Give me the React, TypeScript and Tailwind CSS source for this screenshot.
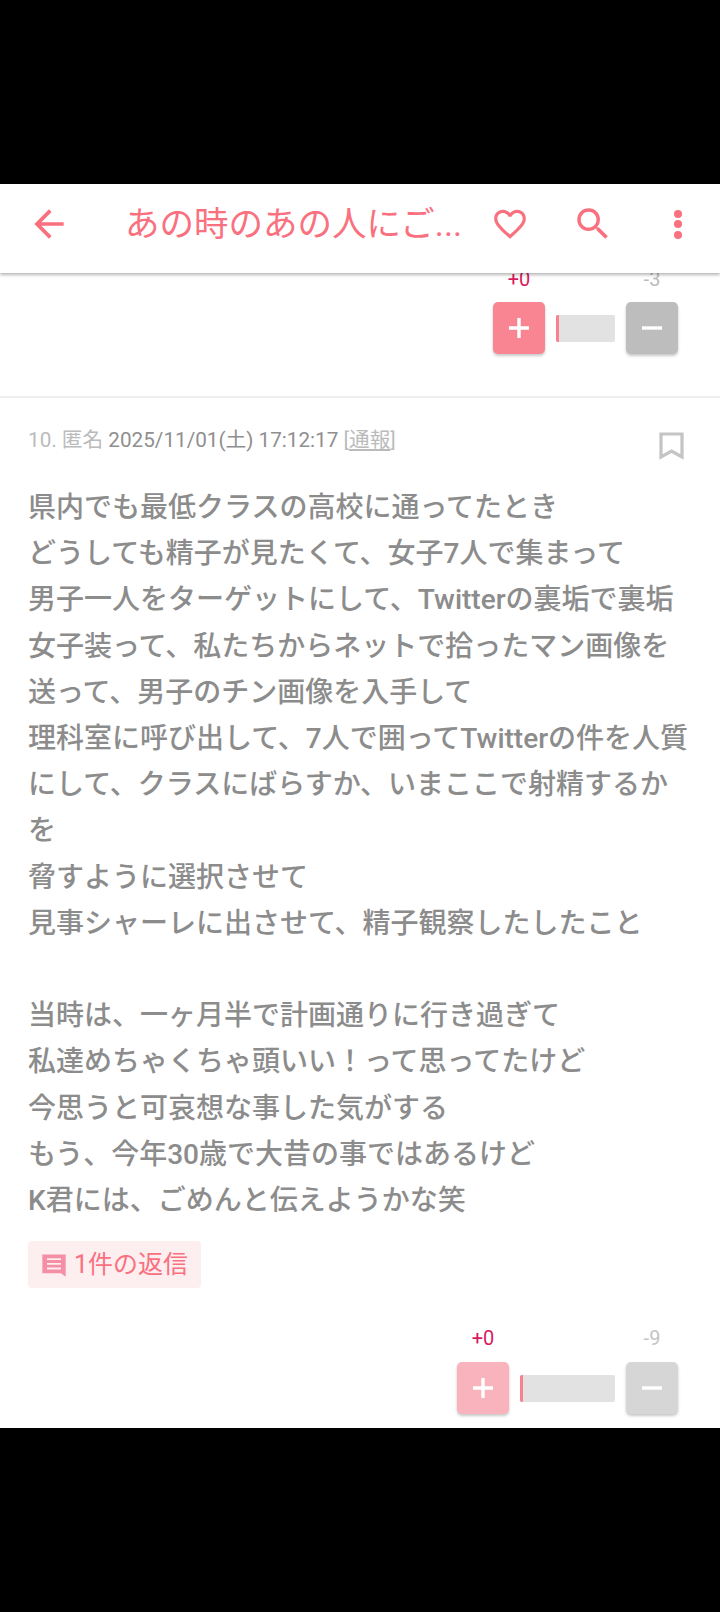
import { MdArrowBack, MdFavoriteBorder, MdSearch } from "react-icons/md";

const pink = "text-[#f9707f]";
const fontClass = "font-['Roboto','Noto_Sans_CJK_JP',sans-serif]";

const lines = [
  "県内でも最低クラスの高校に通ってたとき",
  "どうしても精子が見たくて、女子7人で集まって",
  "男子一人をターゲットにして、Twitterの裏垢で裏垢",
  "女子装って、私たちからネットで拾ったマン画像を",
  "送って、男子のチン画像を入手して",
  "理科室に呼び出して、7人で囲ってTwitterの件を人質",
  "にして、クラスにばらすか、いまここで射精するか",
  "を",
  "脅すように選択させて",
  "見事シャーレに出させて、精子観察したしたこと",
  "\u00a0",
  "当時は、一ヶ月半で計画通りに行き過ぎて",
  "私達めちゃくちゃ頭いい！って思ってたけど",
  "今思うと可哀想な事した気がする",
  "もう、今年30歳で大昔の事ではあるけど",
  "K君には、ごめんと伝えようかな笑",
];

const VoteRow = ({
  minus,
  barClass,
  plusClass,
  minusClass,
  minusLabelClass,
  labelGap,
}: {
  minus: string;
  barClass: string;
  plusClass: string;
  minusClass: string;
  minusLabelClass: string;
  labelGap: string;
}) => (
  <div className="flex flex-col">
    <div className={`flex justify-end gap-[11px] text-[20px] leading-[28px] ${labelGap}`}>
      <span className="w-[52px] text-center text-[#d81b60]">+0</span>
      <span className={barClass} />
      <span className={`w-[52px] text-center ${minusLabelClass}`}>{minus}</span>
    </div>
    <div className="flex items-center justify-end gap-[11px]">
      <div className={`flex h-[52px] w-[52px] items-center justify-center rounded-[5px] shadow-[0_2px_3px_rgba(0,0,0,0.22)] ${plusClass}`}>
        <svg width="24" height="24" viewBox="0 0 24 24" fill="none" stroke="white" strokeWidth="3.4">
          <path d="M12 2v20M2 12h20" />
        </svg>
      </div>
      <div className={`flex h-[27px] overflow-hidden rounded-[2px] bg-[#e2e2e2] ${barClass}`}>
        <div className="h-full w-[3px] bg-[#f9808f]" />
      </div>
      <div className={`flex h-[52px] w-[52px] items-center justify-center rounded-[5px] shadow-[0_2px_3px_rgba(0,0,0,0.22)] ${minusClass}`}>
        <svg width="24" height="24" viewBox="0 0 24 24" fill="none" stroke="white" strokeWidth="3.4">
          <path d="M2 12h20" />
        </svg>
      </div>
    </div>
  </div>
);

const App = () => {
  return (
    <div className={`flex h-[1612px] w-[720px] flex-col overflow-hidden bg-black ${fontClass}`}>
      <div className="h-[184px] shrink-0" />
      <div className="flex h-[1244px] shrink-0 flex-col overflow-hidden bg-white">
        <header className="relative z-10 flex h-[89px] shrink-0 items-center bg-white pb-[9px] pl-[27px] shadow-[0_2px_3px_rgba(0,0,0,0.28)]">
          <MdArrowBack size={44} className={`shrink-0 ${pink}`} />
          <h1 className={`ml-[54px] w-[340px] shrink-0 whitespace-nowrap text-[34.5px] leading-[44px] ${pink}`}>
            あの時のあの人にご...
          </h1>
          <MdFavoriteBorder size={38} className={`ml-[26px] shrink-0 ${pink}`} />
          <MdSearch size={42} className={`ml-[43px] shrink-0 ${pink}`} />
          <div className="ml-[60px] flex flex-col gap-[2.5px]">
            <span className="h-[8px] w-[8px] rounded-full bg-[#f9707f]" />
            <span className="h-[8px] w-[8px] rounded-full bg-[#f9707f]" />
            <span className="h-[8px] w-[8px] rounded-full bg-[#f9707f]" />
          </div>
        </header>

        <div className="-mt-[8px] flex h-[133px] shrink-0 flex-col border-b-2 border-[#eeeeee] pr-[42px]">
          <VoteRow
            minus="-3"
            barClass="w-[59px]"
            plusClass="bg-[#f98593]"
            minusClass="bg-[#bdbdbd]"
            minusLabelClass="text-[#bdbdbd]"
            labelGap="pb-[9px]"
          />
        </div>

        <article className="pl-[28px] pr-[28px] pt-[27px]">
          <div className="flex items-start justify-between">
            <p className="text-[20.7px] leading-[30px] text-[#8f8f8f]">
              <span className="text-[#bbbbbb]">10. 匿名</span> 2025/11/01(土) 17:12:17{" "}
              <span className="text-[#bbbbbb]">
                [<span className="underline">通報</span>]
              </span>
            </p>
            <svg width="25" height="29" viewBox="0 0 25 29" fill="none" stroke="#c4c4c4" strokeWidth="3.2" className="mr-[8px] mt-[7px] shrink-0">
              <path d="M2 2h21v23l-10.5-6L2 25z" />
            </svg>
          </div>
          <div className="mt-[24px] text-[28px] font-medium leading-[46.2px] text-[#8c8c8c]">
            {lines.map((line, i) => (
              <p key={i} className="whitespace-nowrap">
                {line}
              </p>
            ))}
          </div>
          <div className="mt-[17px] flex h-[47px] w-[173px] items-center gap-[6px] rounded-[4px] bg-[#fdeef0] pl-[12px] text-[25px]">
            <svg width="28" height="28" viewBox="0 0 24 24" fill="#f48fa6">
              <path d="M2 3h20v19l-4-3H2z" />
              <path d="M6 7h12M6 11h12M6 15h12" stroke="#fdeef0" strokeWidth="1.6" />
            </svg>
            <span className="text-[#f9707f]">1件の返信</span>
          </div>
        </article>

        <div className="mt-[36px] pr-[42px]">
          <VoteRow
            minus="-9"
            barClass="w-[95px]"
            plusClass="bg-[#f8b3bc]"
            minusClass="bg-[#d6d6d6]"
            minusLabelClass="text-[#c4c4c4]"
            labelGap="pb-[10px]"
          />
        </div>
      </div>
      <div className="flex-1" />
    </div>
  );
};

export default App;
